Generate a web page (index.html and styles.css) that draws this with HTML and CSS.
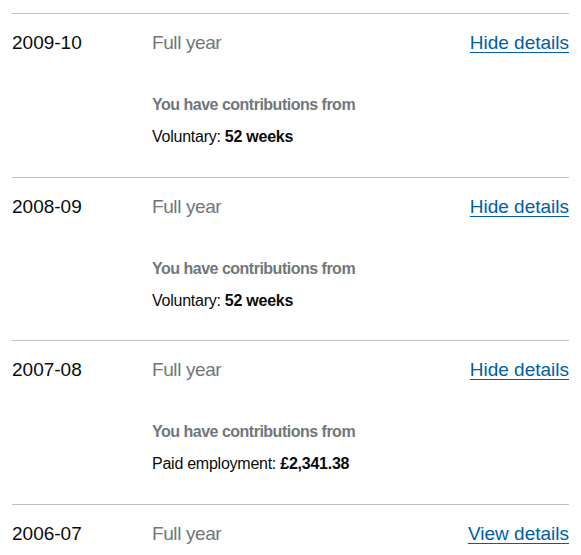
FILE: index.html
```html
<!DOCTYPE html>
<html lang="en">
<head>
<meta charset="utf-8">
<title>National Insurance record</title>
<link rel="stylesheet" href="styles.css">
</head>
<body>
<div class="record">
  <section class="year">
    <div class="summary">
      <span class="tax-year">2009-10</span>
      <span class="status">Full year</span>
      <a class="toggle" href="#">Hide details</a>
    </div>
    <div class="details">
      <p class="details-title">You have contributions from</p>
      <p class="details-line">Voluntary: <strong>52 weeks</strong></p>
    </div>
  </section>
  <section class="year">
    <div class="summary">
      <span class="tax-year">2008-09</span>
      <span class="status">Full year</span>
      <a class="toggle" href="#">Hide details</a>
    </div>
    <div class="details">
      <p class="details-title">You have contributions from</p>
      <p class="details-line">Voluntary: <strong>52 weeks</strong></p>
    </div>
  </section>
  <section class="year">
    <div class="summary">
      <span class="tax-year">2007-08</span>
      <span class="status">Full year</span>
      <a class="toggle" href="#">Hide details</a>
    </div>
    <div class="details">
      <p class="details-title">You have contributions from</p>
      <p class="details-line">Paid employment: <strong>£2,341.38</strong></p>
    </div>
  </section>
  <section class="year">
    <div class="summary">
      <span class="tax-year">2006-07</span>
      <span class="status">Full year</span>
      <a class="toggle" href="#">View details</a>
    </div>
  </section>
</div>
</body>
</html>
```

FILE: styles.css
```css
html, body {
  margin: 0;
  padding: 0;
  background: #ffffff;
}

body {
  font-family: "Liberation Sans", Arial, sans-serif;
  color: #0b0c0c;
  overflow: hidden;
}

.record {
  margin: 13px 12px 0 12px;
}

.year {
  border-top: 1px solid #bfc1c3;
}

.summary {
  display: flex;
  align-items: baseline;
  padding-top: 16px;
  font-size: 19px;
  line-height: 25px;
}

.tax-year {
  width: 140px;
  flex: none;
}

.status {
  flex: 1;
  color: #6f777b;
  letter-spacing: -0.4px;
}

.toggle {
  color: #005ea5;
  text-decoration: underline;
  text-underline-offset: 3px;
  text-decoration-thickness: 1px;
}

.details {
  padding: 40px 0 29.5px 140px;
}

.details p {
  margin: 0;
  font-size: 16px;
  line-height: 20px;
}

.details-title {
  font-weight: 700;
  color: #6f777b;
  letter-spacing: -0.5px;
  margin-bottom: 12px !important;
}

.details-line {
  letter-spacing: -0.25px;
}

.details-line strong {
  font-weight: 700;
}
```
